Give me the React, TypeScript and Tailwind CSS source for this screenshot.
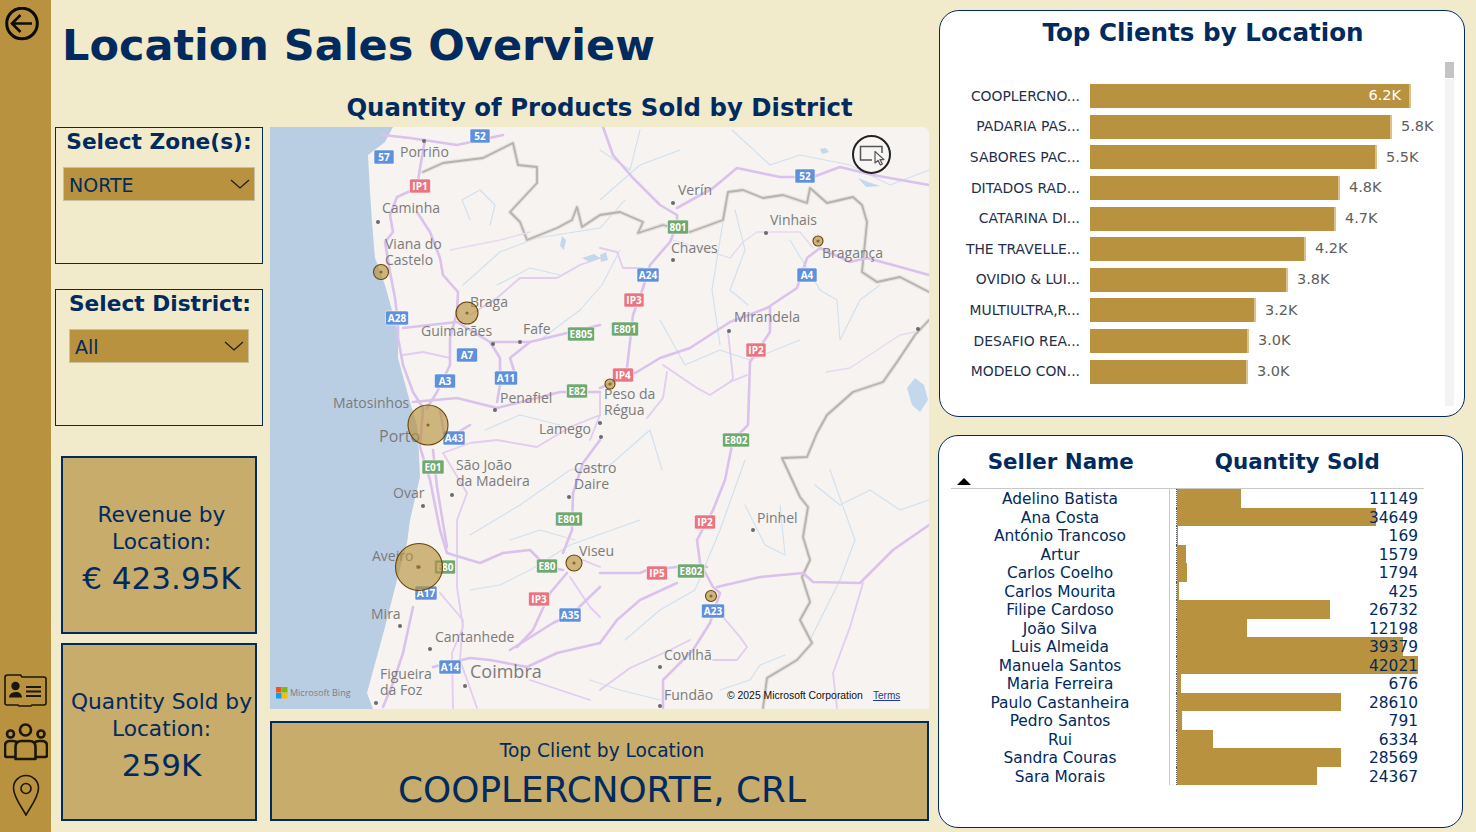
import { FC } from 'react'

const clients = [
  { name: 'COOPLERCNO...', value: '6.2K', width: 321 },
  { name: 'PADARIA PAS...', value: '5.8K', width: 302 },
  { name: 'SABORES PAC...', value: '5.5K', width: 287 },
  { name: 'DITADOS RAD...', value: '4.8K', width: 250 },
  { name: 'CATARINA DI...', value: '4.7K', width: 246 },
  { name: 'THE TRAVELLE...', value: '4.2K', width: 216 },
  { name: 'OVIDIO & LUI...', value: '3.8K', width: 198 },
  { name: 'MULTIULTRA,R...', value: '3.2K', width: 166 },
  { name: 'DESAFIO REA...', value: '3.0K', width: 159 },
  { name: 'MODELO CON...', value: '3.0K', width: 158 },
]

const sellers: [string, number][] = [
  ['Adelino Batista', 11149],
  ['Ana Costa', 34649],
  ['António Trancoso', 169],
  ['Artur', 1579],
  ['Carlos Coelho', 1794],
  ['Carlos Mourita', 425],
  ['Filipe Cardoso', 26732],
  ['João Silva', 12198],
  ['Luis Almeida', 39379],
  ['Manuela Santos', 42021],
  ['Maria Ferreira', 676],
  ['Paulo Castanheira', 28610],
  ['Pedro Santos', 791],
  ['Rui', 6334],
  ['Sandra Couras', 28569],
  ['Sara Morais', 24367],
]

const borders = [
  '423,172 443,163 483,158 513,143 518,165 537,167 537,183 510,212 520,222 527,240 557,228 572,220 577,207 582,227 600,215 620,212 643,222 638,233 663,225 690,232 723,220 728,192 743,190 763,198 783,195 807,203 810,188 827,203 853,197 862,205 867,222 862,272 877,282 900,277 929,292',
  '929,320 915,335 897,362 883,382 853,392 827,415 817,433 807,457 782,458 800,497 808,507 803,537 810,560 802,577 810,602 800,620 812,643 797,660 767,678 763,708',
]

const majorRoads = [
  '425,140 420,168 417,188 397,197 390,215 393,232 385,242 390,272 395,298 398,322 398,338 403,365 413,392 423,408',
  '417,212 430,232 440,258 443,275 458,292 457,312 450,338 450,365 437,392 427,408',
  '383,135 410,138 457,145 503,135',
  '403,328 457,322 490,342 530,342 567,333 600,325',
  '600,388 637,372 660,358 690,348 730,322 767,308 797,288 807,258 820,248 850,262 867,258 893,265 929,275',
  '603,127 613,155 633,178 660,205 677,215 677,225 670,242 650,265 643,288 633,315 630,342 627,368',
  '677,208 713,188 737,168 780,177 813,177 840,167 873,175 929,185',
  '770,308 770,332 750,362 748,425 733,440 725,480 713,510 697,540 700,563 713,587 720,593 710,623 693,650 663,680 663,708',
  '600,573 640,573 647,570 677,567 707,567',
  '717,587 760,577 803,573 813,582 860,583 893,550 929,525',
  '600,643 617,620 640,600 677,583',
  '420,447 430,480 440,530 447,553 460,557 480,563 503,553 530,550 547,567 563,570',
  '433,450 437,487 447,547',
  '413,402 457,398 497,408 537,398 560,392 600,392',
  '517,647 533,630 550,593 567,573',
  '510,650 553,623 573,613 600,587',
  '413,607 403,653 393,683 383,707',
  '433,667 470,658 490,660 527,667 557,653 600,643',
  '573,493 572,530 563,553',
  '600,440 583,463 573,493',
  '490,342 500,358 500,385 497,402',
  '530,342 510,358 517,380',
  '423,408 420,447',
  '440,410 445,440 470,425',
]

const minorRoads = [
  '600,258 580,265 557,278 520,278 497,298 470,315',
  '403,355 423,352 450,358',
  '600,248 617,252 623,268 643,268',
  '728,332 733,378 730,382 747,375',
  '663,365 697,388 710,395 730,382',
  '667,372 663,398 647,418',
  '443,453 467,493 457,520 457,587 463,627 452,653 453,708',
  '440,593 463,620 460,660 477,708',
  '443,453 470,443 497,440 537,447 570,427 600,415',
  '570,577 590,607 600,617',
  '583,560 600,567',
  '863,583 850,627 833,673 837,708',
  '723,617 740,637 747,647 737,660 713,660',
  '600,690 630,668 670,650 690,640',
  '600,392 600,415 590,440',
  '530,680 560,690 590,700',
]

const thinRoads = [
  '730,258 743,242 757,232 800,232 813,248',
  '826,372 850,368 900,335 915,332',
  '673,240 700,248 730,258',
  '450,250 500,240 530,232',
]

const rivers = [
  '463,285 500,252 537,238 600,228 625,200',
  '470,220 462,200 480,190 495,205 490,225',
  '600,150 630,170 640,130',
  '732,130 770,165 800,155 850,165 890,185 929,170',
  '725,210 720,240 712,290 720,345',
  '735,210 745,250 730,290 748,305',
  '790,240 820,290 837,300 840,340 860,300 880,285',
  '620,250 602,285 580,310 540,340',
  '497,285 530,268 560,275',
  '660,320 685,365 720,350 750,360 800,340',
  '485,430 520,415 560,425',
  '470,535 520,505 570,470 610,465 650,430 662,470',
  '470,590 500,585 530,570 570,545 640,520',
  '510,540 540,530 575,540',
  '625,640 660,610 695,590 720,530 745,460',
  '745,505 765,545 785,555 780,505',
  '830,470 855,540 840,580 810,640',
  '815,485 840,505 870,490 900,510 929,500',
  '785,655 760,665 750,680 720,690',
  '590,680 620,690 660,700',
  '600,200 640,165 680,150',
]

const lakes = [
  '820,149 826,148 829,152 822,154',
  '858,178 868,182 880,186 866,187',
  '907,388 915,378 924,385 928,400 920,412 912,405',
  '562,236 566,240 564,250 560,246',
  '582,258 594,254 600,258 590,262',
  '600,255 606,252 608,260 601,262',
]

const shields: [string, number, number, string, number][] = [
  ['52', 480, 136, '#5e90dc', 20], ['57', 384, 157, '#5e90dc', 20], ['IP1', 420, 186, '#ea7480', 21], ['52', 805, 176, '#5e90dc', 20],
  ['801', 678, 227, '#6fa96f', 21], ['A24', 648, 275, '#5e90dc', 22], ['A4', 807, 275, '#5e90dc', 20], ['IP3', 634, 300, '#ea7480', 20],
  ['A28', 397, 318, '#5e90dc', 23], ['E805', 581, 334, '#6fa96f', 27], ['E801', 625, 329, '#6fa96f', 27], ['IP2', 756, 350, '#ea7480', 20],
  ['A7', 467, 355, '#5e90dc', 21], ['A11', 506, 378, '#5e90dc', 23], ['A3', 445, 381, '#5e90dc', 21], ['E82', 577, 391, '#6fa96f', 21],
  ['IP4', 623, 375, '#ea7480', 21], ['E802', 736, 440, '#6fa96f', 27], ['A43', 454, 438, '#5e90dc', 22], ['E01', 433, 467, '#6fa96f', 22],
  ['E801', 569, 519, '#6fa96f', 27], ['IP2', 705, 522, '#ea7480', 21], ['E80', 445, 567, '#6fa96f', 21], ['E80', 547, 566, '#6fa96f', 21],
  ['IP5', 657, 573, '#ea7480', 21], ['E802', 691, 571, '#6fa96f', 27], ['A17', 426, 593, '#5e90dc', 22], ['IP3', 539, 599, '#ea7480', 21],
  ['A35', 570, 615, '#5e90dc', 22], ['A23', 713, 611, '#5e90dc', 23], ['A14', 450, 667, '#5e90dc', 22],
]

const labels: [string, number, number, number?][] = [
  ['Porriño', 400, 157], ['Caminha', 382, 213], ['Viana do', 385, 249], ['Castelo', 385, 265], ['Braga', 470, 307], ['Guimarães', 421, 336],
  ['Fafe', 523, 334], ['Matosinhos', 333, 408], ['Penafiel', 500, 403], ['Porto', 379, 442, 16], ['Lamego', 539, 434], ['São João', 456, 470],
  ['da Madeira', 456, 486], ['Ovar', 393, 498], ['Castro', 574, 473], ['Daire', 574, 489], ['Aveiro', 372, 561], ['Mira', 371, 619],
  ['Cantanhede', 435, 642], ['Figueira', 380, 679], ['da Foz', 380, 695], ['Coimbra', 470, 678, 18], ['Viseu', 579, 556], ['Covilhã', 664, 660],
  ['Fundão', 664, 700], ['Pinhel', 757, 523], ['Verín', 678, 195], ['Chaves', 671, 253], ['Vinhais', 770, 225], ['Bragança', 822, 258],
  ['Mirandela', 734, 322], ['Peso da', 604, 399], ['Régua', 604, 415],
]

const dots = [[424, 141], [378, 222], [493, 344], [520, 342], [495, 410], [600, 423], [452, 495], [423, 506], [569, 497], [400, 626], [430, 649], [465, 686], [376, 703], [673, 260], [766, 233], [729, 331], [918, 329], [673, 203], [753, 530], [660, 667], [660, 706], [601, 437], [418, 567]]

const bubbles = [
  [381, 272, 7.5], [467, 313, 11], [428, 425, 20], [419, 567, 23.5], [574, 563, 8], [610, 384, 5], [818, 241, 5], [711, 596, 5.5],
]

const MapView: FC = () => (
  <div className="relative h-[582px] w-[659px] overflow-hidden rounded-tr-md">
    <svg viewBox="270 127 659 582" className="block h-full w-full font-['Open_Sans',sans-serif]">
      <rect x="270" y="127" width="659" height="582" fill="#f6f3f0" />
      <polygon
        points="270,127 393,127 385,142 368,155 370,192 372,222 375,258 385,285 398,332 398,358 410,402 417,425 418,435 420,477 410,520 407,543 397,580 385,627 367,693 373,709 270,709"
        fill="#bacee3"
      />
      <g fill="none" strokeLinejoin="round" strokeLinecap="round" className="blur-[0.4px]">
        {rivers.map((p) => (
          <polyline key={p} points={p} stroke="#cfe0f0" strokeWidth="1.1" />
        ))}
        {borders.map((p) => (
          <g key={p}>
            <polyline points={p} stroke="#e3e0dd" strokeWidth="4" />
            <polyline points={p} stroke="#b5b2b0" strokeWidth="1.8" />
          </g>
        ))}
        {thinRoads.map((p) => (
          <polyline key={p} points={p} stroke="#e8d8f2" strokeWidth="1.3" />
        ))}
        {minorRoads.map((p) => (
          <polyline key={p} points={p} stroke="#e2ccf0" strokeWidth="1.8" />
        ))}
        {majorRoads.map((p) => (
          <polyline key={p} points={p} stroke="#dac2ec" strokeWidth="2.6" />
        ))}
      </g>
      {lakes.map((p) => (
        <polygon key={p} points={p} fill="#c3d8ec" />
      ))}
      {dots.map(([x, y]) => (
        <circle key={`${x}-${y}`} cx={x} cy={y} r="2" fill="#6b6b6b" />
      ))}
      {labels.map(([text, x, y, size]) => (
        <text key={text} x={x} y={y} fontSize={size ?? 14} fill="#7b7b7b">
          {text}
        </text>
      ))}
      {shields.map(([text, x, y, color, w]) => (
        <g key={`${text}-${x}`}>
          <rect x={x - w / 2} y={y - 7} width={w} height={14} rx="1.5" fill={color} stroke="#ffffff" strokeOpacity="0.55" />
          <text x={x} y={y + 3.6} fontSize="10" fontWeight="700" textAnchor="middle" fill="#ffffff">
            {text}
          </text>
        </g>
      ))}
      {bubbles.map(([x, y, r]) => (
        <g key={`${x}-${y}`}>
          <circle cx={x} cy={y} r={r} fill="#b8923f" fillOpacity="0.65" stroke="#6a4600" strokeWidth="1.1" />
          <circle cx={x} cy={y} r="1.6" fill="#8a6a2a" />
        </g>
      ))}
      <rect x="276" y="687" width="5.5" height="5.5" fill="#f25022" />
      <rect x="282" y="687" width="5.5" height="5.5" fill="#7fba00" />
      <rect x="276" y="693" width="5.5" height="5.5" fill="#00a4ef" />
      <rect x="282" y="693" width="5.5" height="5.5" fill="#ffb900" />
      <text x="290" y="696" fontSize="9" fill="#7d7d7d">Microsoft Bing</text>
      <text x="727" y="699" fontSize="10.4" fill="#111111" className="font-['Liberation_Sans',sans-serif]">© 2025 Microsoft Corporation</text>
      <text x="873" y="699" fontSize="10" fill="#1f3a93" textDecoration="underline" className="font-['Liberation_Sans',sans-serif]">Terms</text>
    </svg>
    <button className="absolute left-[582px] top-[8px] flex h-[39px] w-[39px] items-center justify-center rounded-full border-2 border-[#222222] bg-[#f8f6f4]">
      <svg width="28" height="24" viewBox="0 0 28 24" fill="none">
        <path d="M14 17H2.5V3.5H24V10" stroke="#555555" strokeWidth="1.5" />
        <path d="M17 8.5V20l3-2.6 2.4 4.6 2-1-2.4-4.4h4z" fill="#f8f6f4" stroke="#555555" strokeWidth="1.2" strokeLinejoin="round" />
      </svg>
    </button>
  </div>
)

const Chevron: FC = () => (
  <svg width="20" height="10" viewBox="0 0 20 10" fill="none">
    <path d="M1 1l9 8 9-8" stroke="#1b1b1b" strokeWidth="1.2" />
  </svg>
)

const Slicer: FC<{ title: string; value: string; inset: string }> = ({ title, value, inset }) => (
  <div className={`flex h-[137px] w-[208px] flex-col border border-[#012a5e] ${inset}`}>
    <div className="h-[39px] text-center text-[21.7px] leading-[28px] font-bold whitespace-nowrap text-[#012a5e]">{title}</div>
    <div className="flex h-[34px] items-center justify-between border border-[#c9c0a0] bg-[#b8923f] pr-[4px] pl-[5px] text-[19px] text-[#012a5e]">
      <span className="pt-[2px]">{value}</span>
      <Chevron />
    </div>
  </div>
)

const Kpi: FC<{ lines: string[]; value: string }> = ({ lines, value }) => (
  <div className="flex h-[178px] w-[196px] flex-col items-center justify-center border-2 border-[#012a5e] bg-[#c8ac6b] pt-[8px] pl-[5px] text-[#012a5e]">
    <div className="text-center text-[21.7px] leading-[27px] whitespace-nowrap">
      {lines.map((l) => (
        <div key={l}>{l}</div>
      ))}
    </div>
    <div className="mt-[4px] text-[31px] leading-[38px] whitespace-nowrap">{value}</div>
  </div>
)

const Sidebar: FC = () => (
  <div className="flex h-full w-[51px] shrink-0 flex-col justify-between bg-[#b8923f] pt-[7px] pb-[16px]">
    <svg width="34" height="34" viewBox="0 0 34 34" fill="none" className="ml-[5px]" stroke="#0b0b0b">
      <circle cx="17" cy="16.5" r="15.3" strokeWidth="3" />
      <path d="M27 16.5H7M15.5 8L7 16.5l8.500 8.500" strokeWidth="2.6" />
    </svg>
    <div className="flex flex-col items-center gap-[14px] text-[#1c1708]">
      <svg width="43" height="33" viewBox="0 0 43 33" fill="none" stroke="currentColor">
        <path d="M1 3.5Q1 1 3.5 1h13l1.500 2h22q2 0 2 2v24q0 2-2 2H28l-1 1H15l-1-1H3q-2 0-2-2z" strokeWidth="1.6" />
        <circle cx="11.5" cy="12" r="4.2" fill="currentColor" stroke="none" />
        <path d="M5 23.5c.5-4.5 3.500-5 6.500-5.500s6 1 6.500 5.500z" fill="currentColor" stroke="none" />
        <path d="M22 13h15M22 17.500h15M22 22h15" strokeWidth="1.8" />
      </svg>
      <svg width="44" height="38" viewBox="0 0 44 38" fill="none" stroke="currentColor" strokeWidth="2.6" strokeLinejoin="round" className="mt-[2px]">
        <circle cx="21.500" cy="7" r="5.500" />
        <circle cx="6.500" cy="11" r="3.500" />
        <circle cx="37" cy="11" r="3.500" />
        <path d="M11.500 36V24q0-6 6-6h8q6 0 6 6v12z" />
        <path d="M11.500 34H3q-2 0-2-2v-9q0-5 5-5h3q3 0 5 2M31.500 34H41q2 0 2-2v-9q0-5-5-5h-3q-3 0-5 2" />
      </svg>
      <svg width="28" height="42" viewBox="0 0 28 42" fill="none" stroke="currentColor" strokeWidth="1.600" className="-mt-[1px]">
        <path d="M14 41C9 32 1.500 23 1.500 14a12.500 12.500 0 0125 0c0 9-7.500 18-12.500 27z" />
        <circle cx="14" cy="14.500" r="5" />
      </svg>
    </div>
  </div>
)

const TopClients: FC = () => (
  <div className="relative h-[407px] w-[526px] rounded-[20px] border border-[#012a5e] bg-white">
    <div className="pt-[4px] pl-[2px] text-center text-[24.6px] leading-[36px] font-bold text-[#012a5e]">Top Clients by Location</div>
    <div className="mt-[30px] flex flex-col">
      {clients.map((c, i) => (
        <div key={c.name} className="flex h-[30.6px] items-center">
          <div className="w-[140px] text-right text-[13.9px] whitespace-nowrap text-[#1f2f4a]">{c.name}</div>
          <div className="ml-[10px] flex h-[24px] items-center justify-end border-r-2 border-[#d9c08c] bg-[#b8923f] pr-[8px]" style={{ width: c.width }}>
            {i === 0 && <span className="text-[14.5px] text-white">{c.value}</span>}
          </div>
          {i > 0 && <span className="ml-[9px] text-[14.5px] text-[#605e5c]">{c.value}</span>}
        </div>
      ))}
    </div>
    <div className="absolute top-[51px] left-[505px] flex h-[344px] w-[9px] flex-col gap-px">
      <div className="h-[16px] bg-[#c4c4c4]" />
      <div className="flex-1 bg-[#f3f3f3]" />
    </div>
  </div>
)

const SellerTable: FC = () => (
  <div className="h-[393px] w-[525px] rounded-[20px] border border-[#012a5e] bg-white pl-[12px]">
    <div className="relative flex h-[53px] w-[473px] items-start border-b border-[#c8c8c8] pt-[10px] text-[21.4px] leading-[32px] font-bold text-[#012a5e]">
      <span className="w-[220px] text-center whitespace-nowrap">Seller Name</span>
      <span className="w-[254px] text-center whitespace-nowrap">Quantity Sold</span>
      <span className="absolute bottom-[3px] left-[6px] h-0 w-0 border-x-[7px] border-b-[7px] border-x-transparent border-b-black" />
    </div>
    <div className="flex flex-col">
      {sellers.map(([name, qty]) => (
        <div key={name} className="flex h-[18.5px] items-stretch text-[15.4px] leading-[20px] text-[#012a5e]">
          <div className="w-[219px] border-r border-[#c8c8c8] text-center whitespace-nowrap">{name}</div>
          <div className="relative ml-[6px] w-[242px] border-l border-dotted border-[#555555]">
            <div className="absolute inset-y-0 left-0 bg-[#b8923f]" style={{ width: (qty * 241) / 42021 }} />
            <div className="absolute inset-y-0 right-0 text-right">{qty}</div>
          </div>
        </div>
      ))}
    </div>
  </div>
)

export default function App() {
  return (
    <div className="flex h-[832px] w-[1476px] overflow-hidden bg-[#f1eacb] font-['DejaVu_Sans',sans-serif]">
      <Sidebar />
      <div className="flex w-[888px] shrink-0 flex-col">
        <div className="h-[89px] pt-[17px] pl-[11px] text-[43px] leading-[56px] font-bold whitespace-nowrap text-[#012a5e]">Location Sales Overview</div>
        <div className="flex">
          <div className="ml-[4px] flex w-[215px] shrink-0 flex-col pt-[38px]">
            <Slicer title="Select Zone(s):" value="NORTE" inset="px-[7px]" />
            <div className="mt-[25px]">
              <Slicer title="Select District:" value="All" inset="px-[13px]" />
            </div>
            <div className="mt-[30px] ml-[6px] flex flex-col gap-[9px]">
              <Kpi lines={['Revenue by', 'Location:']} value="€ 423.95K" />
              <Kpi lines={['Quantity Sold by', 'Location:']} value="259K" />
            </div>
          </div>
          <div className="flex w-[659px] flex-col">
            <div className="flex h-[38px] items-center justify-center text-[24.4px] font-bold whitespace-nowrap text-[#012a5e]">Quantity of Products Sold by District</div>
            <MapView />
            <div className="mt-[12px] flex h-[100px] flex-col items-center justify-center border-2 border-[#012a5e] bg-[#c8ac6b] pt-[7px] pl-[5px] text-[#012a5e]">
              <div className="text-[18.6px] leading-[28px]">Top Client by Location</div>
              <div className="mt-[3px] text-[35.8px] leading-[44px] whitespace-nowrap">COOPLERCNORTE, CRL</div>
            </div>
          </div>
        </div>
      </div>
      <div className="flex flex-col gap-[18px] pt-[10px]">
        <TopClients />
        <div className="-ml-px">
          <SellerTable />
        </div>
      </div>
    </div>
  )
}
